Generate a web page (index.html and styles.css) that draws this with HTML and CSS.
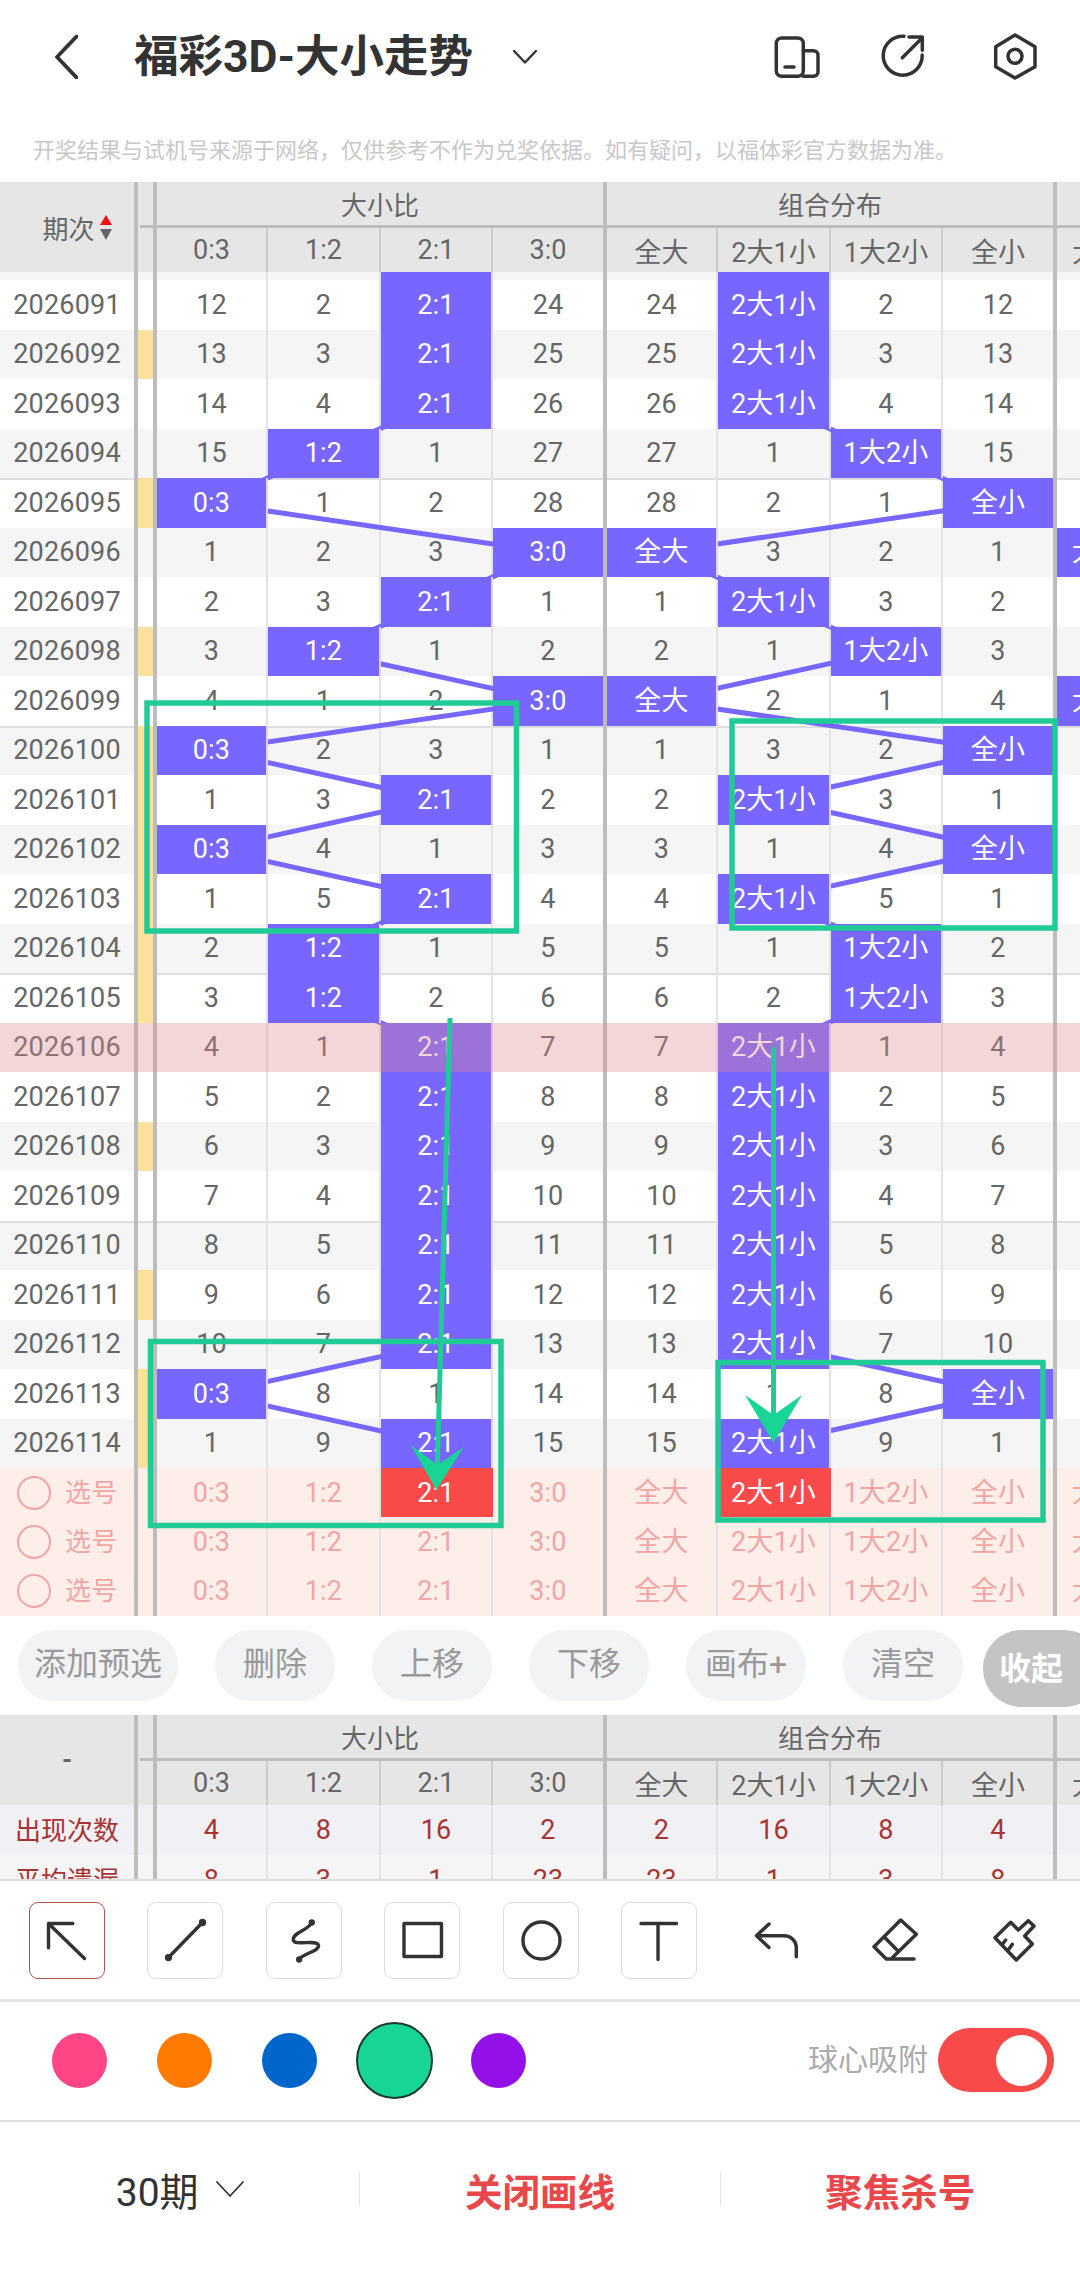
FILE: index.html
```html
<!DOCTYPE html>
<html lang="zh-CN">
  <head>
    <meta charset="UTF-8" />
    <title>福彩3D-大小走势</title>
    <link rel="stylesheet" href="styles.css">
  </head>
  <body>
    <header class="topbar">
      <svg class="icon topbar__back" viewBox="0 0 23 44"><path d="M22 1 L2 22 L22 43" /></svg>
      <h1 class="topbar__title">福彩3D-大小走势</h1>
      <svg class="icon topbar__caret" viewBox="0 0 24 14"><path d="M1 1 L12 12.500 L23 1" /></svg>
      <svg class="icon topbar__icon topbar__icon_layout" viewBox="0 0 46 46"><rect x="2.300" y="4" width="27" height="38.300" rx="5.500" /><path d="M29.300 16.700 H39.500 A4.500 4.500 0 0 1 44 21.200 V37.800 A4.500 4.500 0 0 1 39.500 42.300 H29.300 M11 33 H20" /></svg>
      <svg class="icon topbar__icon topbar__icon_share" viewBox="0 0 48 50"><path d="M25 4.200 A19.500 19.500 0 1 0 43.200 23 M23.300 25.700 L43.300 5.700 M30 5 H43.300 V18.300" /></svg>
      <svg class="icon topbar__icon topbar__icon_setting" viewBox="0 0 44 50"><path d="M22 3 L42 14.700 V34.700 L22 46 L2.700 34.700 V14.700 Z" /><circle cx="22" cy="24.300" r="7" /></svg>
    </header>
    <p class="notice">开奖结果与试机号来源于网络，仅供参考不作为兑奖依据。如有疑问，以福体彩官方数据为准。</p>

    <section class="trend">
      <div class="thead">
        <div class="thead__no">期次<span class="sort"><i class="sort__up"></i><i class="sort__down"></i></span></div>
        <i class="thead__bar"></i>
        <div class="thead__group thead__group_a">大小比</div>
        <div class="thead__group thead__group_b">组合分布</div>
        <div class="thead__group thead__group_c"></div>
        <span>0:3</span><span>1:2</span><span>2:1</span><span>3:0</span><span>全大</span><span>2大1小</span><span>1大2小</span><span>全小</span><span>大大小</span>
      </div>
      <div class="rows">
        <div class="row"><span class="no">2026091</span><i></i><span>12</span><span>2</span><span class="hit">2:1</span><span>24</span><span>24</span><span class="hit">2大1小</span><span>2</span><span>12</span><span></span></div>
        <div class="row"><span class="no">2026092</span><i class="mark"></i><span>13</span><span>3</span><span class="hit">2:1</span><span>25</span><span>25</span><span class="hit">2大1小</span><span>3</span><span>13</span><span></span></div>
        <div class="row"><span class="no">2026093</span><i></i><span>14</span><span>4</span><span class="hit">2:1</span><span>26</span><span>26</span><span class="hit">2大1小</span><span>4</span><span>14</span><span></span></div>
        <div class="row"><span class="no">2026094</span><i></i><span>15</span><span class="hit">1:2</span><span>1</span><span>27</span><span>27</span><span>1</span><span class="hit">1大2小</span><span>15</span><span></span></div>
        <div class="row sep"><span class="no">2026095</span><i class="mark"></i><span class="hit">0:3</span><span>1</span><span>2</span><span>28</span><span>28</span><span>2</span><span>1</span><span class="hit">全小</span><span></span></div>
        <div class="row"><span class="no">2026096</span><i></i><span>1</span><span>2</span><span>3</span><span class="hit">3:0</span><span class="hit">全大</span><span>3</span><span>2</span><span>1</span><span class="hit">大大小</span></div>
        <div class="row"><span class="no">2026097</span><i></i><span>2</span><span>3</span><span class="hit">2:1</span><span>1</span><span>1</span><span class="hit">2大1小</span><span>3</span><span>2</span><span></span></div>
        <div class="row"><span class="no">2026098</span><i class="mark"></i><span>3</span><span class="hit">1:2</span><span>1</span><span>2</span><span>2</span><span>1</span><span class="hit">1大2小</span><span>3</span><span></span></div>
        <div class="row"><span class="no">2026099</span><i></i><span>4</span><span>1</span><span>2</span><span class="hit">3:0</span><span class="hit">全大</span><span>2</span><span>1</span><span>4</span><span class="hit">大大小</span></div>
        <div class="row sep"><span class="no">2026100</span><i class="mark"></i><span class="hit">0:3</span><span>2</span><span>3</span><span>1</span><span>1</span><span>3</span><span>2</span><span class="hit">全小</span><span></span></div>
        <div class="row"><span class="no">2026101</span><i class="mark"></i><span>1</span><span>3</span><span class="hit">2:1</span><span>2</span><span>2</span><span class="hit">2大1小</span><span>3</span><span>1</span><span></span></div>
        <div class="row"><span class="no">2026102</span><i class="mark"></i><span class="hit">0:3</span><span>4</span><span>1</span><span>3</span><span>3</span><span>1</span><span>4</span><span class="hit">全小</span><span></span></div>
        <div class="row"><span class="no">2026103</span><i class="mark"></i><span>1</span><span>5</span><span class="hit">2:1</span><span>4</span><span>4</span><span class="hit">2大1小</span><span>5</span><span>1</span><span></span></div>
        <div class="row"><span class="no">2026104</span><i class="mark"></i><span>2</span><span class="hit">1:2</span><span>1</span><span>5</span><span>5</span><span>1</span><span class="hit">1大2小</span><span>2</span><span></span></div>
        <div class="row sep"><span class="no">2026105</span><i class="mark"></i><span>3</span><span class="hit">1:2</span><span>2</span><span>6</span><span>6</span><span>2</span><span class="hit">1大2小</span><span>3</span><span></span></div>
        <div class="row today"><span class="no">2026106</span><i></i><span>4</span><span>1</span><span class="hit">2:1</span><span>7</span><span>7</span><span class="hit">2大1小</span><span>1</span><span>4</span><span></span></div>
        <div class="row"><span class="no">2026107</span><i></i><span>5</span><span>2</span><span class="hit">2:1</span><span>8</span><span>8</span><span class="hit">2大1小</span><span>2</span><span>5</span><span></span></div>
        <div class="row"><span class="no">2026108</span><i class="mark"></i><span>6</span><span>3</span><span class="hit">2:1</span><span>9</span><span>9</span><span class="hit">2大1小</span><span>3</span><span>6</span><span></span></div>
        <div class="row"><span class="no">2026109</span><i></i><span>7</span><span>4</span><span class="hit">2:1</span><span>10</span><span>10</span><span class="hit">2大1小</span><span>4</span><span>7</span><span></span></div>
        <div class="row sep"><span class="no">2026110</span><i></i><span>8</span><span>5</span><span class="hit">2:1</span><span>11</span><span>11</span><span class="hit">2大1小</span><span>5</span><span>8</span><span></span></div>
        <div class="row"><span class="no">2026111</span><i class="mark"></i><span>9</span><span>6</span><span class="hit">2:1</span><span>12</span><span>12</span><span class="hit">2大1小</span><span>6</span><span>9</span><span></span></div>
        <div class="row"><span class="no">2026112</span><i></i><span>10</span><span>7</span><span class="hit">2:1</span><span>13</span><span>13</span><span class="hit">2大1小</span><span>7</span><span>10</span><span></span></div>
        <div class="row"><span class="no">2026113</span><i class="mark"></i><span class="hit">0:3</span><span>8</span><span>1</span><span>14</span><span>14</span><span>1</span><span>8</span><span class="hit">全小</span><span></span></div>
        <div class="row"><span class="no">2026114</span><i class="mark"></i><span>1</span><span>9</span><span class="hit">2:1</span><span>15</span><span>15</span><span class="hit">2大1小</span><span>9</span><span>1</span><span></span></div>
        <div class="row pick"><span class="no"><b class="pick__ring"></b>选号</span><i></i><span>0:3</span><span>1:2</span><span class="hit hit_red">2:1</span><span>3:0</span><span>全大</span><span class="hit hit_red">2大1小</span><span>1大2小</span><span>全小</span><span>大大小</span></div>
        <div class="row pick"><span class="no"><b class="pick__ring"></b>选号</span><i></i><span>0:3</span><span>1:2</span><span>2:1</span><span>3:0</span><span>全大</span><span>2大1小</span><span>1大2小</span><span>全小</span><span>大大小</span></div>
        <div class="row pick"><span class="no"><b class="pick__ring"></b>选号</span><i></i><span>0:3</span><span>1:2</span><span>2:1</span><span>3:0</span><span>全大</span><span>2大1小</span><span>1大2小</span><span>全小</span><span>大大小</span></div>
      </div>
    </section>

    <nav class="actions">
      <button class="pill pill_wide">添加预选</button>
      <button class="pill">删除</button>
      <button class="pill">上移</button>
      <button class="pill">下移</button>
      <button class="pill">画布+</button>
      <button class="pill">清空</button>
      <button class="pill pill_fold">收起</button>
    </nav>

    <section class="stats">
      <div class="thead">
        <div class="thead__no thead__no_dash">-</div>
        <i class="thead__bar"></i>
        <div class="thead__group thead__group_a">大小比</div>
        <div class="thead__group thead__group_b">组合分布</div>
        <div class="thead__group thead__group_c"></div>
        <span>0:3</span><span>1:2</span><span>2:1</span><span>3:0</span><span>全大</span><span>2大1小</span><span>1大2小</span><span>全小</span><span>大大小</span>
      </div>
      <div class="row stat stat_count"><span class="no">出现次数</span><i></i><span>4</span><span>8</span><span>16</span><span>2</span><span>2</span><span>16</span><span>8</span><span>4</span><span></span></div>
      <div class="row stat stat_miss"><span class="no">平均遗漏</span><i></i><span>8</span><span>3</span><span>1</span><span>23</span><span>23</span><span>1</span><span>3</span><span>8</span><span></span></div>
    </section>

    <div class="tools">
      <button class="tool tool_on"><svg class="icon" viewBox="0 0 76 77"><path d="M44 21 H19 V46 M19 21 L56 57" /></svg></button>
      <button class="tool"><svg class="icon" viewBox="0 0 76 77"><path d="M21 56 L56 20" /><circle class="dot" cx="21" cy="56" r="3" /><circle class="dot" cx="56" cy="20" r="3" /></svg></button>
      <button class="tool"><svg class="icon" viewBox="0 0 76 77"><path d="M46 20 C43 28 26 30 27 38 C28 45 52 36 53 44 C53 50 36 52 33 58" /><circle class="dot" cx="46" cy="20" r="2.500" /><circle class="dot" cx="33" cy="58" r="2.500" /></svg></button>
      <button class="tool"><svg class="icon" viewBox="0 0 76 77"><rect x="19.500" y="21" width="38.500" height="34" /></svg></button>
      <button class="tool"><svg class="icon" viewBox="0 0 76 77"><circle cx="38.500" cy="38.500" r="19" /></svg></button>
      <button class="tool"><svg class="icon" viewBox="0 0 76 77"><path d="M19.500 21 H56 M37 21 V58" /></svg></button>
      <svg class="icon tools__undo" viewBox="0 0 44 40"><path d="M15 4 L2.500 15.700 L15 27.500 M2.500 15.700 H30 C37 15.700 42.300 21 42.300 28 V36.700" /></svg>
      <svg class="icon tools__eraser" viewBox="0 0 46 44"><path d="M28.700 3 L44.300 17.300 L19 42 H14.300 L2 29.700 Z M12 19.700 L25 33 M14.300 42 H42" /></svg>
      <svg class="icon tools__brush" viewBox="0 0 44 44"><path d="M18.700 4.300 L3 19.700 L24.300 42 L40.300 26 L32.700 18 L42 8 L36.300 2.700 L26.300 12 Z M10.300 26.300 L13.700 22 M16.300 32 L20.300 26.300" /></svg>
    </div>

    <div class="colors">
      <i class="swatch swatch_pink"></i>
      <i class="swatch swatch_orange"></i>
      <i class="swatch swatch_blue"></i>
      <i class="swatch swatch_green"></i>
      <i class="swatch swatch_purple"></i>
      <span class="colors__label">球心吸附</span>
      <span class="switch"><i class="switch__knob"></i></span>
    </div>

    <footer class="footer">
      <div class="footer__item footer__item_period">30期<svg class="icon footer__caret" viewBox="0 0 28 16"><path d="M1 1 L14 15 L27 1" /></svg></div>
      <div class="footer__item footer__item_red">关闭画线</div>
      <div class="footer__item footer__item_red">聚焦杀号</div>
    </footer>

    <!-- 走势连线 -->
    <svg class="trend_lines" viewBox="0 0 1080 2270">
      <polyline points="437,305 437,403.750 323.500,453.250 212,502.750 548.500,552.250 437,601.750 323.500,651.250 548.500,700.750 212,750.250 437,799.750 212,849.250 437,898.750 323.500,948.250 323.500,997.750 437,1047.250 437,1344.250 212,1393.750 437,1443.250 437,1492.750" />
      <polyline points="773,305 773,403.750 885.500,453.250 998,502.750 661,552.250 773,601.750 885.500,651.250 661,700.750 998,750.250 773,799.750 998,849.250 773,898.750 885.500,948.250 885.500,997.750 773,1047.250 773,1344.250 998,1393.750 773,1443.250 773,1492.750" />
    </svg>
    <!-- 手绘标记 -->
    <svg class="marks" viewBox="0 0 1080 2270">
      <rect x="147" y="703" width="369.500" height="228" />
      <rect x="732" y="721" width="323" height="207" />
      <rect x="150.500" y="1341.500" width="350.500" height="184" />
      <rect x="718" y="1362.500" width="325" height="157.500" />
      <path d="M450 1018 L437 1478" />
      <path d="M773.500 1047 V1430" />
      <polygon points="410.700,1445 437.500,1465 464,1446.700 436.400,1490" />
      <polygon points="745,1395 773.500,1415 802,1395 773.500,1442.700" />
    </svg>
  </body>
</html>
```

FILE: styles.css
```css
:root {
  --color-text: #666;
  --color-line: #bdbdbd;
  --color-divider: #e3e3e3;
  --color-head: #e6e6e6;
  --color-hit: #7766ff;
  --color-red: #f94a4a;
  --color-green: #20cb96;
  --cols: 138px 19px 111px 113px 112px 114px 111px 113px 112px 114px 111px;
  color: var(--color-text);
  font-family: Roboto, 'Noto Sans CJK SC', sans-serif;
}
* {
  margin: 0;
  padding: 0;
  box-sizing: border-box;
}
body {
  width: 1080px;
  height: 2270px;
  position: relative;
  overflow: hidden;
  background-color: #fff;
}
i {
  font-style: normal;
}
button {
  border: none;
  font-family: inherit;
  background: none;
}
.icon {
  display: block;
  fill: none;
  stroke: #333;
  stroke-width: 3.5;
  stroke-linecap: round;
  stroke-linejoin: round;
}
/* ヘッダー */
.topbar {
  display: flex;
  align-items: center;
  height: 114px;
  padding: 0 43px 0 55px;
}
.topbar__back {
  width: 23px;
  height: 44px;
  stroke-width: 3.8;
}
.topbar__title {
  margin-left: 56px;
  width: 338px;
  font-size: 44.500px;
  font-weight: 700;
  line-height: 1;
  white-space: nowrap;
  color: #333;
}
.topbar__caret {
  margin: 0 0 0 41px;
  width: 24px;
  height: 14px;
  stroke-width: 2.4;
}
.topbar__icon {
  height: 46px;
}
.topbar__icon_layout {
  width: 46px;
  margin-left: auto;
}
.topbar__icon_share {
  width: 48px;
  height: 50px;
  margin-left: 59px;
}
.topbar__icon_setting {
  width: 44px;
  height: 50px;
  margin-left: 66px;
}
.notice {
  height: 68px;
  padding: 24px 0 0 33px;
  font-size: 22px;
  line-height: 26px;
  white-space: nowrap;
  color: #c8c8c8;
}
/* 表頭 */
.thead {
  display: grid;
  grid-template-columns: var(--cols);
  grid-template-rows: 46px 44px;
  font-size: 27px;
  background-color: var(--color-head);
}
.thead__no {
  grid-column: 1;
  grid-row: 1 / 3;
  display: flex;
  align-items: center;
  justify-content: center;
  gap: 5px;
  padding-left: 20px;
  font-size: 26px;
  border-right: 4px solid var(--color-line);
}
.thead__no_dash {
  padding-left: 0;
  font-weight: 700;
}
.thead__bar {
  grid-column: 2;
  grid-row: 1 / 3;
  border-right: 4px solid var(--color-line);
  background: linear-gradient(var(--color-line), var(--color-line)) 2px 43px / 100% 3px no-repeat;
}
.thead__group {
  grid-row: 1;
  display: flex;
  align-items: center;
  justify-content: center;
  font-size: 26px;
  border-bottom: 3px solid var(--color-line);
  border-right: 4px solid var(--color-line);
}
.thead__group_a {
  grid-column: 3 / 7;
}
.thead__group_b {
  grid-column: 7 / 11;
}
.thead__group_c {
  grid-column: 11;
  border-right: none;
}
.thead > span {
  grid-row: 2;
  display: flex;
  align-items: center;
  justify-content: center;
  white-space: nowrap;
  border-right: 2px solid #cbcbcb;
}
.thead > span:nth-of-type(4),
.thead > span:nth-of-type(8) {
  border-right: 4px solid var(--color-line);
}
.thead > span:nth-of-type(9) {
  border-right: none;
}
.thead__no .sort {
  display: flex;
  flex-direction: column;
  gap: 4px;
}
.sort__up {
  border-style: solid;
  border-width: 0 6.5px 10px;
  border-color: transparent transparent #f01010;
}
.sort__down {
  border-style: solid;
  border-width: 11px 6.5px 0;
  border-color: #666 transparent transparent;
}
/* 走势 */
.trend {
  height: 1434px;
}
.row {
  display: grid;
  grid-template-columns: var(--cols);
  height: 49.5px;
  position: relative;
  font-size: 27px;
  letter-spacing: 0.2px;
  line-height: 1;
  background-color: #fff;
}
.rows .row:nth-child(even) {
  background-color: #f5f5f5;
}
/* 1行目は上に8pxの帯がある */
.rows .row:first-child {
  height: 57.5px;
  background: linear-gradient(#f5f5f5 8px, #fff 8px);
}
.rows .row:first-child > span {
  padding-top: 9px;
}
.row > span {
  display: flex;
  align-items: center;
  justify-content: center;
  padding-top: 1px;
  white-space: nowrap;
  border-right: 2px solid var(--color-divider);
}
.row > span:nth-child(6),
.row > span:nth-child(10),
.row > .no,
.row > i {
  border-right: 4px solid var(--color-line);
}
.row > span:last-child {
  border-right: none;
}
.row > .mark {
  background-color: #fce09b;
}
.row.sep {
  box-shadow: inset 0 2px 0 #dedede;
}
.rows .row.today {
  background-color: #fff;
}
.row.today::after {
  content: '';
  position: absolute;
  inset: 0;
  z-index: 3;
  background-color: rgba(220, 138, 143, 0.35);
}
.row > .hit {
  position: relative;
  z-index: 2;
  color: #fff;
  background-color: var(--color-hit);
  border-right-color: #dcd8fb;
}
.rows .pick,
.rows .pick:nth-child(even) {
  height: 49.2px;
  color: #f2a5a5;
  background-color: #fdeee9;
}
.pick > .no {
  justify-content: flex-start;
  padding-left: 17px;
  gap: 14px;
  font-size: 26px;
}
.pick__ring {
  width: 34px;
  height: 34px;
  border: 2px solid #f2a5a5;
  border-radius: 50%;
}
.row > .hit_red {
  background-color: var(--color-red);
  border-right-color: transparent;
}
/* ボタン */
.actions {
  display: flex;
  align-items: flex-start;
  gap: 37px;
  height: 99px;
  padding: 14px 0 0 18px;
  overflow: hidden;
}
.pill {
  flex: none;
  width: 120px;
  height: 71px;
  padding-bottom: 10px;
  border-radius: 35px;
  font-size: 32px;
  color: #999;
  background-color: #f2f3f5;
}
.pill_wide {
  width: 160px;
}
.pill_fold {
  width: 120px;
  height: 77px;
  margin-left: -17px;
  padding: 0 24px 6px 0;
  border-radius: 38px;
  font-weight: 700;
  color: #fff;
  background-color: #c4c4c4;
}
/* 統計 */
.stats {
  height: 164px;
  overflow: hidden;
}
.stat {
  height: 50px;
}
.stat_count {
  color: #a83333;
  background-color: #f1f0f5;
}
.stat_miss {
  color: #a83333;
  background-color: #f5f5f5;
}
.stat > .no {
  font-size: 26px;
  letter-spacing: 0;
}
/* 描画ツール */
.tools {
  display: flex;
  align-items: flex-start;
  height: 123px;
  padding: 21px 0 0 29px;
  border-top: 2px solid #ddd;
  border-bottom: 3px solid #e5e5e5;
}
.tool {
  flex: none;
  width: 76px;
  height: 77px;
  margin-right: 42.4px;
  border: 1px solid #ddd;
  border-radius: 9px;
}
.tool_on {
  border-color: #b5524f;
}
.tool .icon {
  width: 100%;
  height: 100%;
}
.tool .dot {
  fill: #333;
  stroke-width: 1.5;
}
.tools__undo {
  width: 44px;
  height: 40px;
  margin: 18px 0 0 15px;
}
.tools__eraser {
  width: 46px;
  height: 44px;
  margin: 15px 0 0 74px;
}
.tools__brush {
  width: 44px;
  height: 44px;
  margin: 16px 0 0 74px;
}
/* 色 */
.colors {
  display: flex;
  align-items: center;
  height: 120px;
  padding: 0 26px 2px 52px;
  border-bottom: 2px solid #e0e0e0;
}
.swatch {
  flex: none;
  width: 55px;
  height: 55px;
  margin-right: 50px;
  border-radius: 50%;
}
.swatch_pink {
  background-color: #ff4585;
}
.swatch_orange {
  background-color: #ff7a00;
}
.swatch_blue {
  margin-right: 39px;
  background-color: #0066cc;
}
.swatch_green {
  width: 77px;
  height: 77px;
  margin-right: 38px;
  border: 2px solid #1a3a30;
  background-color: #17d596;
}
.swatch_purple {
  margin-right: 0;
  background-color: #9311e8;
}
.colors__label {
  margin-left: auto;
  font-size: 30px;
  line-height: 1;
  color: #aaa;
}
.switch {
  display: flex;
  align-items: center;
  justify-content: flex-end;
  width: 116px;
  height: 64px;
  margin-left: 10px;
  padding-right: 7px;
  border-radius: 32px;
  background-color: var(--color-red);
}
.switch__knob {
  width: 51px;
  height: 51px;
  border-radius: 50%;
  background-color: #fff;
}
/* フッター */
.footer {
  display: flex;
  align-items: center;
  height: 148px;
  padding-bottom: 14px;
}
.footer__item {
  flex: 1;
  display: flex;
  align-items: center;
  justify-content: center;
  height: 34px;
  font-size: 39px;
  white-space: nowrap;
}
.footer__item_period {
  gap: 17px;
  color: #333;
}
.footer__item_red {
  border-left: 1px solid #e5e5e5;
  font-size: 37.500px;
  font-weight: 700;
  color: #e9484a;
}
.footer__caret {
  width: 28px;
  height: 16px;
  stroke-width: 1.8;
}
/* 重ね描き */
.trend_lines,
.marks {
  position: absolute;
  top: 0;
  left: 0;
  width: 1080px;
  height: 2270px;
  pointer-events: none;
}
.trend_lines {
  z-index: 1;
  fill: none;
  stroke: var(--color-hit);
  stroke-width: 5;
}
.marks {
  z-index: 4;
  fill: none;
  stroke: var(--color-green);
  stroke-width: 5.500;
}
.marks path {
  stroke-width: 5;
}
.marks polygon {
  stroke: none;
  fill: #18d495;
}
```
